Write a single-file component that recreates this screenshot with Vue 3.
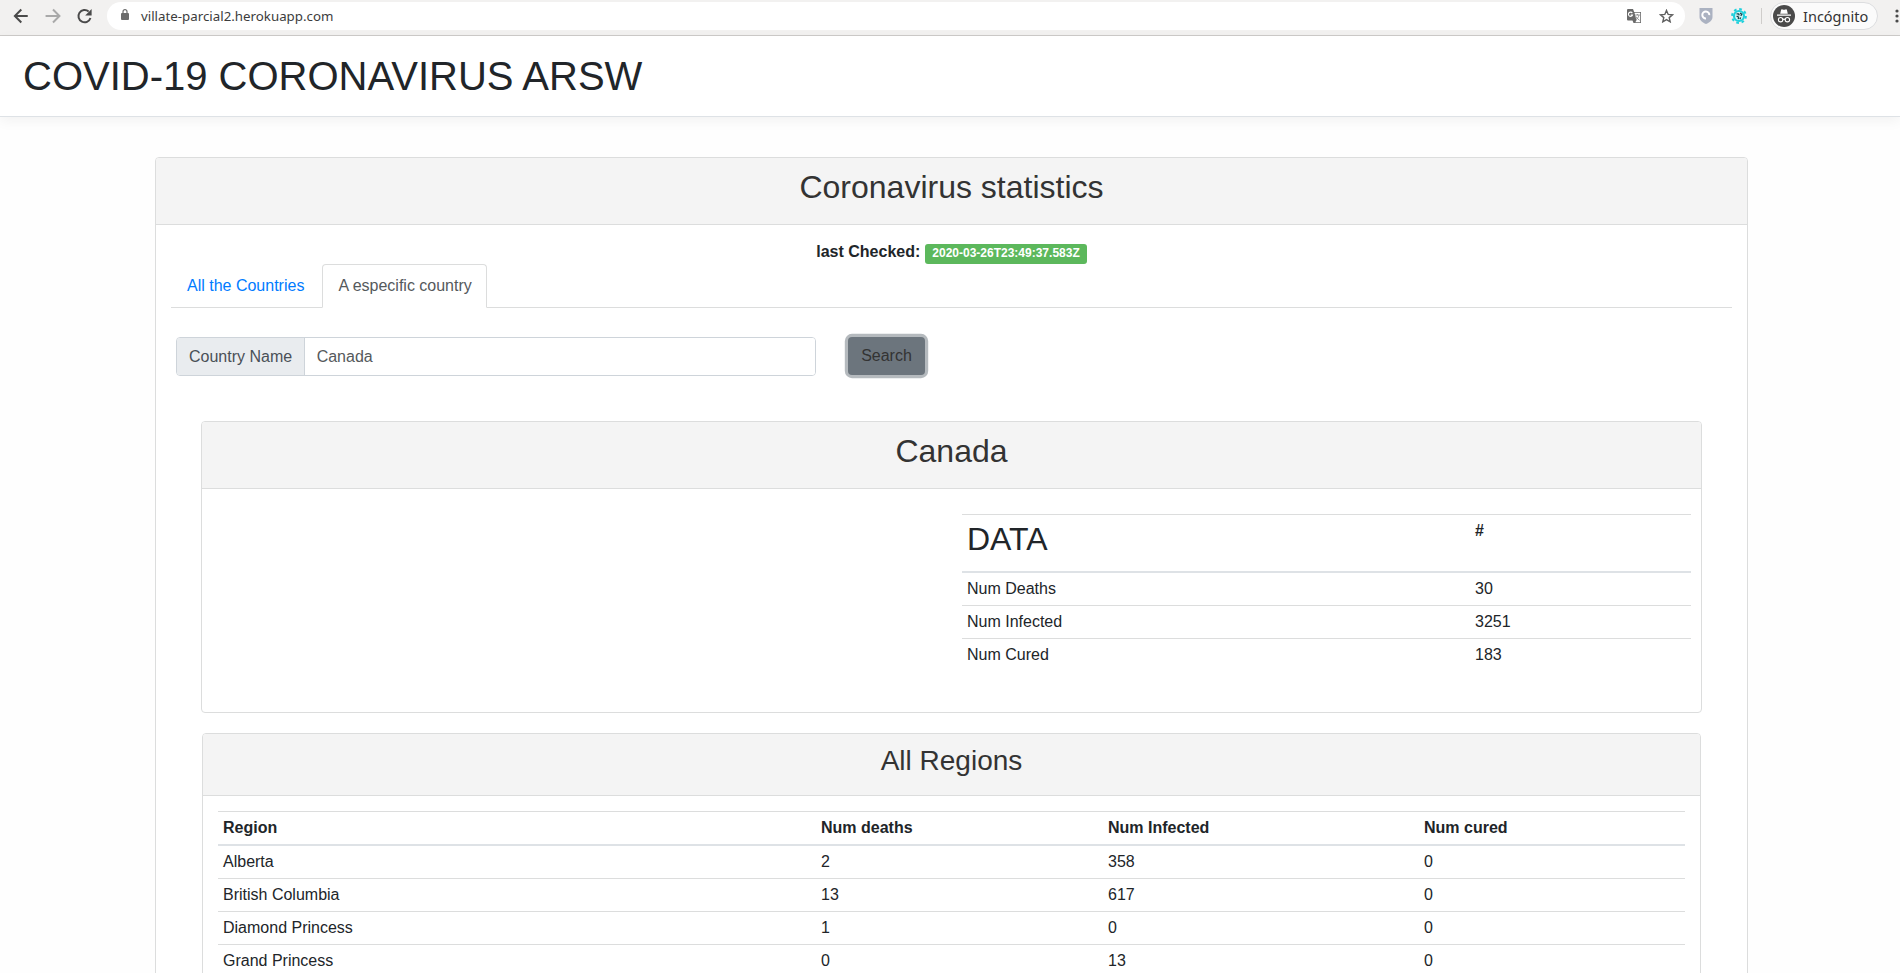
<script setup>
const stats = [
  ['Num Deaths', '30'],
  ['Num Infected', '3251'],
  ['Num Cured', '183'],
]
const regions = [
  ['Alberta', 2, 358, 0],
  ['British Columbia', 13, 617, 0],
  ['Diamond Princess', 1, 0, 0],
  ['Grand Princess', 0, 13, 0],
]
</script>

<template>
  <div class="window">
    <div class="toolbar">
      <svg class="nav-icons" width="108" height="35" viewBox="0 0 108 35" fill="none" stroke-width="2">
        <path d="M28 16H15M21.500 9.500 15 16l6.500 6.500" stroke="#4a4a4a" />
        <path d="M46 16h13M53.500 9.500 60 16l-6.500 6.500" stroke="#a9a9a9" />
        <path d="M91.300 18A6.200 6.200 0 1 1 89.500 11.500" stroke="#4a4a4a" />
        <path d="M92.500 9v6.500H86z" fill="#4a4a4a" />
      </svg>
      <div class="address">
        <svg class="lock" width="8" height="12" viewBox="0 0 8 12">
          <rect x="0" y="4" width="8" height="7" rx="1" fill="#6b6b6b" />
          <path d="M2 4.500V2.700a2 2 0 0 1 4 0v1.800" fill="none" stroke="#6b6b6b" stroke-width="1.200" />
        </svg>
        <span class="url">villate-parcial2.herokuapp.com</span>
        <svg class="translate" width="15" height="15" viewBox="0 0 15 15">
          <path d="M1 0h5l1.200 3H14v11H6.500L5.500 11.500H1a1 1 0 0 1-1-1V1a1 1 0 0 1 1-1z" fill="#6a6a6a" />
          <path d="M7.500 3.800h5.700v9.400H8.300l1.200-1.900z" fill="#fff" />
          <path d="M8.200 6h4.600M10.400 5v1M11.900 6.200c-.4 2-1.500 3.500-3 4.500M8.900 7.500c.8 1.500 2 2.600 3.600 3.800" fill="none" stroke="#7a7a7a" stroke-width=".8" />
          <path d="M5.300 4.100A2.100 2.100 0 1 0 5.500 6H3.700" fill="none" stroke="#fff" stroke-width="1.100" />
        </svg>
        <svg class="star" width="15" height="14" viewBox="0 0 15 14">
          <path d="m7.500 1.400 1.700 4 4.300.4-3.300 2.800 1 4.200-3.700-2.200-3.700 2.200 1-4.200L1.500 5.800l4.300-.4z" fill="none" stroke="#5f5f5f" stroke-width="1.400" />
        </svg>
      </div>
      <svg class="shield" width="14" height="16" viewBox="0 0 14 16">
        <path d="M.5 0h13v9c0 3.500-3 5.500-6.500 7C3.500 14.500.5 12.500.5 9z" fill="#abb2c1" />
        <path d="M10.300 7.200A3.500 3.500 0 1 0 7 10.400" fill="none" stroke="#fff" stroke-width="2" />
      </svg>
      <svg class="gear" width="16" height="16" viewBox="0 0 16 16">
        <circle cx="8" cy="8" r="6.900" fill="none" stroke="#1fd0dc" stroke-width="2" stroke-dasharray="2.700 2.720" />
        <circle cx="8" cy="8" r="5" fill="#d9f7f8" stroke="#1fd0dc" stroke-width="2.200" />
        <path d="M5.500 5.800h2l.8 1.600M9 5l1.800 1.200-1 1.600M5.600 8l2 1.200-.3 2M9.800 9.500l-1 1.600" fill="none" stroke="#16454d" stroke-width="1.300" />
      </svg>
      <span class="divider"></span>
      <div class="profile">
        <svg width="22" height="22" viewBox="0 0 22 22">
          <circle cx="11" cy="11" r="11" fill="#4a4a4a" />
          <path d="M7.200 8.800 8 5.200c.2-.9.8-1 1.500-.7q1.500.6 3 0c.7-.3 1.300-.2 1.500.7l.8 3.600zM4 9.600h14v1.200H4z" fill="#fff" />
          <g fill="none" stroke="#fff" stroke-width="1.100">
            <circle cx="7.600" cy="14.700" r="2.200" />
            <circle cx="14.400" cy="14.700" r="2.200" />
            <path d="M9.800 14.500q1.200-.8 2.400 0" />
          </g>
        </svg>
        <span>Incógnito</span>
      </div>
      <svg class="dots" width="4" height="14" viewBox="0 0 4 14" fill="#4a4a4a">
        <circle cx="2" cy="2" r="1.600" />
        <circle cx="2" cy="7" r="1.600" />
        <circle cx="2" cy="12" r="1.600" />
      </svg>
    </div>

    <header class="page-header"><h1>COVID-19 CORONAVIRUS ARSW</h1></header>

    <main class="card outer">
      <div class="card-header"><h2>Coronavirus statistics</h2></div>
      <p class="checked"><b>last Checked:</b><span class="badge">2020-03-26T23:49:37.583Z</span></p>
      <nav class="tabs">
        <a class="tab">All the Countries</a>
        <a class="tab active">A especific country</a>
      </nav>
      <div class="search-row">
        <label class="input-group">
          <span class="addon">Country Name</span>
          <input type="text" value="Canada" />
        </label>
        <button type="button">Search</button>
      </div>

      <section class="card country">
        <div class="card-header"><h2>Canada</h2></div>
        <div class="country-body">
          <table class="stats">
            <thead>
              <tr><th><h2>DATA</h2></th><th class="value">#</th></tr>
            </thead>
            <tbody>
              <tr v-for="s in stats" :key="s[0]"><td>{{ s[0] }}</td><td>{{ s[1] }}</td></tr>
            </tbody>
          </table>
        </div>
      </section>

      <section class="card regions">
        <div class="card-header"><h3>All Regions</h3></div>
        <div class="regions-body">
          <table>
            <thead>
              <tr>
                <th class="c1">Region</th>
                <th class="c2">Num deaths</th>
                <th class="c3">Num Infected</th>
                <th>Num cured</th>
              </tr>
            </thead>
            <tbody>
              <tr v-for="r in regions" :key="r[0]">
                <td v-for="(v, i) in r" :key="i">{{ v }}</td>
              </tr>
            </tbody>
          </table>
        </div>
      </section>
    </main>
  </div>
</template>

<style>
html, body { margin: 0; overflow: hidden; background: #fff; }
</style>

<style scoped>
* { box-sizing: border-box; }
.window {
  height: 973px;
  overflow: hidden;
  font: 16px/24px "Liberation Sans", Arial, sans-serif;
  color: #212529;
  background: #fefefe;
}
h1, h2, h3 { margin: 0; font-weight: 400; line-height: 1.2; }
h1 { font-size: 40px; }
h2 { font-size: 32px; }
h3 { font-size: 28px; }

.toolbar {
  display: flex;
  align-items: flex-start;
  height: 36px;
  background: #f2f1f0;
  border-bottom: 1px solid #cdcbc9;
  overflow: hidden;
  font-family: "Noto Sans", "Open Sans", sans-serif;
}
.nav-icons { flex: none; width: 107px; }
.address {
  display: flex;
  align-items: center;
  width: 1578px;
  height: 28px;
  margin-top: 2px;
  padding: 0 11px 0 14px;
  border-radius: 14px;
  background: #fff;
}
.lock { margin-top: -2px; }
.url { margin-left: 12px; font-size: 13.300px; line-height: 28px; color: #3c3c3c; white-space: nowrap; }
.translate { margin-left: auto; }
.star { margin-left: 17px; }
.shield { margin: 8px 0 0 14px; }
.gear { margin: 8px 0 0 18px; }
.divider { width: 1px; height: 16px; margin: 8px 0 0 14px; background: #cfcdcb; }
.profile {
  display: flex;
  align-items: center;
  flex: none;
  width: 108px;
  height: 28px;
  margin: 2px 0 0 8px;
  padding-left: 2px;
  border: 1px solid #dcdddf;
  border-radius: 14px;
  background: #fbfbfb;
}
.profile span { margin-left: 8px; font-size: 14.500px; line-height: 24px; margin-top: -1px; color: #333; }
.dots { flex: none; margin: 9px 0 0 17px; }

.page-header {
  height: 81px;
  padding: 16px 23px;
  border-bottom: 1px solid #dee2e6;
  background: #fff;
  box-shadow: 0 4px 12px rgba(0, 0, 0, .05);
}

.card {
  display: flex;
  flex-direction: column;
  border: 1px solid #dcdddd;
  border-radius: 4px;
  background: #fff;
}
.card-header {
  flex: none;
  height: 67px;
  padding-top: 10px;
  border-bottom: 1px solid #dcdddd;
  border-radius: 3px 3px 0 0;
  background: #f4f4f4;
  color: #333;
  text-align: center;
}
.outer { width: 1593px; height: 900px; margin: 40px 0 0 155px; padding-bottom: 16px; }

.checked { display: flex; justify-content: center; margin: 15px 0 0; height: 24px; }
.badge {
  height: 20px;
  margin: 4px 0 0 5px;
  padding: 0 7px;
  border-radius: 3px;
  background: #5cb85c;
  color: #fff;
  font-size: 12px;
  font-weight: 700;
  line-height: 19px;
}

.tabs { display: flex; height: 44px; margin: 0 15px; border-bottom: 1px solid #dcdddd; flex: none; }
.tab { height: 44px; padding: 9px 15px; line-height: 24px; color: #007bff; border: 1px solid transparent; }
.tab.active {
  margin-left: 2px;
  padding: 9px 14.500px 9px 15px;
  color: #55595c;
  border-color: #dcdddd;
  border-bottom-color: #fff;
  border-radius: 4px 4px 0 0;
  background: #fff;
}

.search-row { display: flex; align-items: flex-start; margin: 29px 0 0 20px; }
.input-group {
  display: flex;
  width: 640px;
  height: 39px;
  border: 1px solid #ced4da;
  border-radius: 4px;
  overflow: hidden;
}
.addon { padding: 7px 11.500px 6px 12px; color: #495057; background: #e9ecef; border-right: 1px solid #ced4da; white-space: nowrap; }
input { flex: 1; min-width: 0; padding: 0 12px; border: 0; outline: 0; font: inherit; color: #55595c; background: #fff; }
button {
  width: 77px;
  height: 38px;
  margin-left: 32px;
  padding: 0;
  border: 0;
  border-radius: 4px;
  background: #6c757d;
  color: #333;
  font: inherit;
  box-shadow: 0 0 0 3.200px #b5babe;
}

.country { flex: none; width: 1501px; height: 292px; margin: 45px 0 0 45px; }
.country-body { display: flex; justify-content: flex-end; padding: 25px 10px 0 0; }
.regions { flex: none; width: 1499px; height: 400px; margin: 20px 0 0 46px; }
.regions .card-header { height: 62px; }
.regions-body { padding: 15px; }

table { width: 100%; table-layout: fixed; border-collapse: separate; border-spacing: 0; }
th, td { height: 33px; padding: 4px 5px; border-top: 1px solid #dcdddd; text-align: left; vertical-align: top; }
th { height: 35px; border-bottom: 2px solid #dee2e6; }
tbody tr:first-child td { height: 32px; border-top: 0; }
.stats { width: 729px; }
.stats th { height: 59px; }
.stats h2 { padding-top: 1px; }
.value { width: 221px; }
.c1 { width: 598px; }
.c2 { width: 287px; }
.c3 { width: 316px; }
</style>
